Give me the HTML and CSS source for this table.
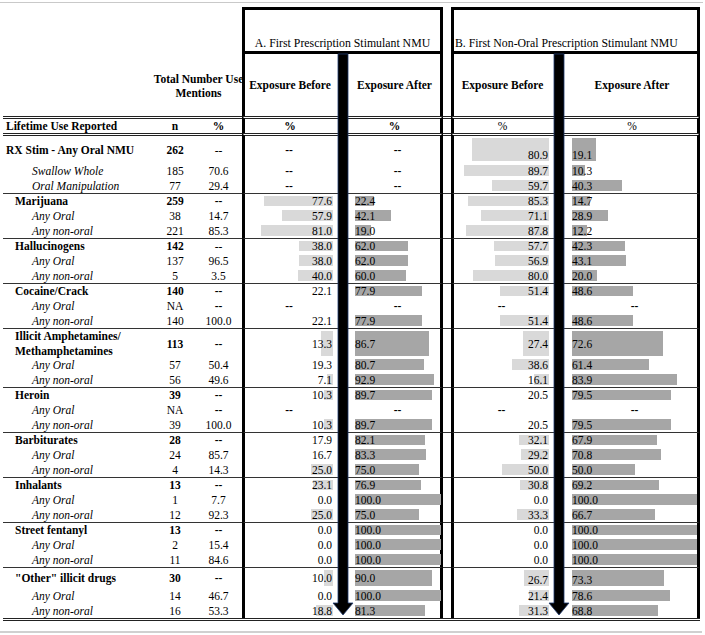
FILE: index.html
```html
<!DOCTYPE html>
<html>
<head>
<meta charset="utf-8">
<link rel="stylesheet" href="styles.css">
</head>
<body>
<div class="page">
  <div class="topline"></div>
  <div class="tbl">
    <div class="row h1">
      <div class="c blank3"></div>
      <div class="c hA">A. First Prescription Stimulant NMU</div>
      <div class="c gp"></div>
      <div class="c hB">B. First Non-Oral Prescription Stimulant NMU</div>
    </div>
    <div class="row h2">
      <div class="c"></div>
      <div class="c tot">Total Number Use<br>Mentions</div>
      <div class="c ab hd">Exposure Before</div>
      <div class="c ag"></div>
      <div class="c aa hd">Exposure After</div>
      <div class="c gp"></div>
      <div class="c bb hd">Exposure Before</div>
      <div class="c bg"></div>
      <div class="c ba hd">Exposure After</div>
    </div>
    <div class="row dbl life">
      <div class="c lab top b">Lifetime Use Reported</div>
      <div class="c n b">n</div>
      <div class="c p b">%</div>
      <div class="c ab ctr b">%</div>
      <div class="c ag"></div>
      <div class="c aa ctr b">%</div>
      <div class="c gp"></div>
      <div class="c bb ctr">%</div>
      <div class="c bg"></div>
      <div class="c ba ctr">%</div>
    </div>

    <!-- RX Stim -->
    <div class="row dbl t27 botB">
      <div class="c lab top b">RX Stim - Any Oral NMU</div>
      <div class="c n b">262</div>
      <div class="c p">--</div>
      <div class="c ab d"><span class="dash b">--</span></div>
      <div class="c ag"></div>
      <div class="c aa d"><span class="dash b">--</span></div>
      <div class="c gp"></div>
      <div class="c bb d"><span class="bar" style="--v:80.9"></span><span class="v">80.9</span></div>
      <div class="c bg"></div>
      <div class="c ba d"><span class="bar" style="--v:19.1"></span><span class="v">19.1</span></div>
    </div>
    <div class="row">
      <div class="c lab sub">Swallow Whole</div>
      <div class="c n">185</div>
      <div class="c p">70.6</div>
      <div class="c ab d"><span class="dash b">--</span></div>
      <div class="c ag"></div>
      <div class="c aa d"><span class="dash b">--</span></div>
      <div class="c gp"></div>
      <div class="c bb d"><span class="bar" style="--v:89.7"></span><span class="v">89.7</span></div>
      <div class="c bg"></div>
      <div class="c ba d"><span class="bar" style="--v:10.3"></span><span class="v">10.3</span></div>
    </div>
    <div class="row">
      <div class="c lab sub">Oral Manipulation</div>
      <div class="c n">77</div>
      <div class="c p">29.4</div>
      <div class="c ab d"><span class="dash b">--</span></div>
      <div class="c ag"></div>
      <div class="c aa d"><span class="dash b">--</span></div>
      <div class="c gp"></div>
      <div class="c bb d"><span class="bar" style="--v:59.7"></span><span class="v">59.7</span></div>
      <div class="c bg"></div>
      <div class="c ba d"><span class="bar" style="--v:40.3"></span><span class="v">40.3</span></div>
    </div>

    <!-- Marijuana -->
    <div class="row sep">
      <div class="c lab b">Marijuana</div>
      <div class="c n b">259</div>
      <div class="c p b">--</div>
      <div class="c ab d"><span class="bar" style="--v:77.6"></span><span class="v">77.6</span></div>
      <div class="c ag"></div>
      <div class="c aa d"><span class="bar" style="--v:22.4"></span><span class="v">22.4</span></div>
      <div class="c gp"></div>
      <div class="c bb d"><span class="bar" style="--v:85.3"></span><span class="v">85.3</span></div>
      <div class="c bg"></div>
      <div class="c ba d"><span class="bar" style="--v:14.7"></span><span class="v">14.7</span></div>
    </div>
    <div class="row">
      <div class="c lab sub">Any Oral</div>
      <div class="c n">38</div>
      <div class="c p">14.7</div>
      <div class="c ab d"><span class="bar" style="--v:57.9"></span><span class="v">57.9</span></div>
      <div class="c ag"></div>
      <div class="c aa d"><span class="bar" style="--v:42.1"></span><span class="v">42.1</span></div>
      <div class="c gp"></div>
      <div class="c bb d"><span class="bar" style="--v:71.1"></span><span class="v">71.1</span></div>
      <div class="c bg"></div>
      <div class="c ba d"><span class="bar" style="--v:28.9"></span><span class="v">28.9</span></div>
    </div>
    <div class="row">
      <div class="c lab sub">Any non-oral</div>
      <div class="c n">221</div>
      <div class="c p">85.3</div>
      <div class="c ab d"><span class="bar" style="--v:81.0"></span><span class="v">81.0</span></div>
      <div class="c ag"></div>
      <div class="c aa d"><span class="bar" style="--v:19.0"></span><span class="v">19.0</span></div>
      <div class="c gp"></div>
      <div class="c bb d"><span class="bar" style="--v:87.8"></span><span class="v">87.8</span></div>
      <div class="c bg"></div>
      <div class="c ba d"><span class="bar" style="--v:12.2"></span><span class="v">12.2</span></div>
    </div>

    <!-- Hallucinogens -->
    <div class="row sep">
      <div class="c lab b">Hallucinogens</div>
      <div class="c n b">142</div>
      <div class="c p">--</div>
      <div class="c ab d"><span class="bar" style="--v:38.0"></span><span class="v">38.0</span></div>
      <div class="c ag"></div>
      <div class="c aa d"><span class="bar" style="--v:62.0"></span><span class="v">62.0</span></div>
      <div class="c gp"></div>
      <div class="c bb d"><span class="bar" style="--v:57.7"></span><span class="v">57.7</span></div>
      <div class="c bg"></div>
      <div class="c ba d"><span class="bar" style="--v:42.3"></span><span class="v">42.3</span></div>
    </div>
    <div class="row">
      <div class="c lab sub">Any Oral</div>
      <div class="c n">137</div>
      <div class="c p">96.5</div>
      <div class="c ab d"><span class="bar" style="--v:38.0"></span><span class="v">38.0</span></div>
      <div class="c ag"></div>
      <div class="c aa d"><span class="bar" style="--v:62.0"></span><span class="v">62.0</span></div>
      <div class="c gp"></div>
      <div class="c bb d"><span class="bar" style="--v:56.9"></span><span class="v">56.9</span></div>
      <div class="c bg"></div>
      <div class="c ba d"><span class="bar" style="--v:43.1"></span><span class="v">43.1</span></div>
    </div>
    <div class="row">
      <div class="c lab sub">Any non-oral</div>
      <div class="c n">5</div>
      <div class="c p">3.5</div>
      <div class="c ab d"><span class="bar" style="--v:40.0"></span><span class="v">40.0</span></div>
      <div class="c ag"></div>
      <div class="c aa d"><span class="bar" style="--v:60.0"></span><span class="v">60.0</span></div>
      <div class="c gp"></div>
      <div class="c bb d"><span class="bar" style="--v:80.0"></span><span class="v">80.0</span></div>
      <div class="c bg"></div>
      <div class="c ba d"><span class="bar" style="--v:20.0"></span><span class="v">20.0</span></div>
    </div>

    <!-- Cocaine -->
    <div class="row sep">
      <div class="c lab b">Cocaine/Crack</div>
      <div class="c n b">140</div>
      <div class="c p b">--</div>
      <div class="c ab d"><span class="v">22.1</span></div>
      <div class="c ag"></div>
      <div class="c aa d"><span class="bar" style="--v:77.9"></span><span class="v">77.9</span></div>
      <div class="c gp"></div>
      <div class="c bb d"><span class="bar" style="--v:51.4"></span><span class="v">51.4</span></div>
      <div class="c bg"></div>
      <div class="c ba d"><span class="bar" style="--v:48.6"></span><span class="v">48.6</span></div>
    </div>
    <div class="row">
      <div class="c lab sub">Any Oral</div>
      <div class="c n">NA</div>
      <div class="c p b">--</div>
      <div class="c ab d"><span class="dash b">--</span></div>
      <div class="c ag"></div>
      <div class="c aa d"><span class="dash b">--</span></div>
      <div class="c gp"></div>
      <div class="c bb d"><span class="dash b">--</span></div>
      <div class="c bg"></div>
      <div class="c ba d"><span class="dash b">--</span></div>
    </div>
    <div class="row">
      <div class="c lab sub">Any non-oral</div>
      <div class="c n">140</div>
      <div class="c p">100.0</div>
      <div class="c ab d"><span class="v">22.1</span></div>
      <div class="c ag"></div>
      <div class="c aa d"><span class="bar" style="--v:77.9"></span><span class="v">77.9</span></div>
      <div class="c gp"></div>
      <div class="c bb d"><span class="bar" style="--v:51.4"></span><span class="v">51.4</span></div>
      <div class="c bg"></div>
      <div class="c ba d"><span class="bar" style="--v:48.6"></span><span class="v">48.6</span></div>
    </div>

    <!-- Amphetamines -->
    <div class="row sep t28">
      <div class="c lab b wrap">Illicit Amphetamines/<br>Methamphetamines</div>
      <div class="c n b">113</div>
      <div class="c p b">--</div>
      <div class="c ab d"><span class="bar" style="--v:13.3"></span><span class="v">13.3</span></div>
      <div class="c ag"></div>
      <div class="c aa d"><span class="bar" style="--v:86.7"></span><span class="v">86.7</span></div>
      <div class="c gp"></div>
      <div class="c bb d"><span class="bar" style="--v:27.4"></span><span class="v">27.4</span></div>
      <div class="c bg"></div>
      <div class="c ba d"><span class="bar" style="--v:72.6"></span><span class="v">72.6</span></div>
    </div>
    <div class="row">
      <div class="c lab sub">Any Oral</div>
      <div class="c n">57</div>
      <div class="c p">50.4</div>
      <div class="c ab d"><span class="v">19.3</span></div>
      <div class="c ag"></div>
      <div class="c aa d"><span class="bar" style="--v:80.7"></span><span class="v">80.7</span></div>
      <div class="c gp"></div>
      <div class="c bb d"><span class="bar" style="--v:38.6"></span><span class="v">38.6</span></div>
      <div class="c bg"></div>
      <div class="c ba d"><span class="bar" style="--v:61.4"></span><span class="v">61.4</span></div>
    </div>
    <div class="row">
      <div class="c lab sub">Any non-oral</div>
      <div class="c n">56</div>
      <div class="c p">49.6</div>
      <div class="c ab d"><span class="bar" style="--v:7.1"></span><span class="v">7.1</span></div>
      <div class="c ag"></div>
      <div class="c aa d"><span class="bar" style="--v:92.9"></span><span class="v">92.9</span></div>
      <div class="c gp"></div>
      <div class="c bb d"><span class="bar" style="--v:16.1"></span><span class="v">16.1</span></div>
      <div class="c bg"></div>
      <div class="c ba d"><span class="bar" style="--v:83.9"></span><span class="v">83.9</span></div>
    </div>

    <!-- Heroin -->
    <div class="row sep">
      <div class="c lab b">Heroin</div>
      <div class="c n b">39</div>
      <div class="c p b">--</div>
      <div class="c ab d"><span class="bar" style="--v:10.3"></span><span class="v">10.3</span></div>
      <div class="c ag"></div>
      <div class="c aa d"><span class="bar" style="--v:89.7"></span><span class="v">89.7</span></div>
      <div class="c gp"></div>
      <div class="c bb d"><span class="v">20.5</span></div>
      <div class="c bg"></div>
      <div class="c ba d"><span class="bar" style="--v:79.5"></span><span class="v">79.5</span></div>
    </div>
    <div class="row">
      <div class="c lab sub">Any Oral</div>
      <div class="c n">NA</div>
      <div class="c p b">--</div>
      <div class="c ab d"><span class="dash b">--</span></div>
      <div class="c ag"></div>
      <div class="c aa d"><span class="dash b">--</span></div>
      <div class="c gp"></div>
      <div class="c bb d"><span class="dash b">--</span></div>
      <div class="c bg"></div>
      <div class="c ba d"><span class="dash b">--</span></div>
    </div>
    <div class="row">
      <div class="c lab sub">Any non-oral</div>
      <div class="c n">39</div>
      <div class="c p">100.0</div>
      <div class="c ab d"><span class="bar" style="--v:10.3"></span><span class="v">10.3</span></div>
      <div class="c ag"></div>
      <div class="c aa d"><span class="bar" style="--v:89.7"></span><span class="v">89.7</span></div>
      <div class="c gp"></div>
      <div class="c bb d"><span class="v">20.5</span></div>
      <div class="c bg"></div>
      <div class="c ba d"><span class="bar" style="--v:79.5"></span><span class="v">79.5</span></div>
    </div>

    <!-- Barbiturates -->
    <div class="row sep">
      <div class="c lab b">Barbiturates</div>
      <div class="c n b">28</div>
      <div class="c p b">--</div>
      <div class="c ab d"><span class="v">17.9</span></div>
      <div class="c ag"></div>
      <div class="c aa d"><span class="bar" style="--v:82.1"></span><span class="v">82.1</span></div>
      <div class="c gp"></div>
      <div class="c bb d"><span class="bar" style="--v:32.1"></span><span class="v">32.1</span></div>
      <div class="c bg"></div>
      <div class="c ba d"><span class="bar" style="--v:67.9"></span><span class="v">67.9</span></div>
    </div>
    <div class="row">
      <div class="c lab sub">Any Oral</div>
      <div class="c n">24</div>
      <div class="c p">85.7</div>
      <div class="c ab d"><span class="v">16.7</span></div>
      <div class="c ag"></div>
      <div class="c aa d"><span class="bar" style="--v:83.3"></span><span class="v">83.3</span></div>
      <div class="c gp"></div>
      <div class="c bb d"><span class="bar" style="--v:29.2"></span><span class="v">29.2</span></div>
      <div class="c bg"></div>
      <div class="c ba d"><span class="bar" style="--v:70.8"></span><span class="v">70.8</span></div>
    </div>
    <div class="row">
      <div class="c lab sub">Any non-oral</div>
      <div class="c n">4</div>
      <div class="c p">14.3</div>
      <div class="c ab d"><span class="bar" style="--v:25.0"></span><span class="v">25.0</span></div>
      <div class="c ag"></div>
      <div class="c aa d"><span class="bar" style="--v:75.0"></span><span class="v">75.0</span></div>
      <div class="c gp"></div>
      <div class="c bb d"><span class="bar" style="--v:50.0"></span><span class="v">50.0</span></div>
      <div class="c bg"></div>
      <div class="c ba d"><span class="bar" style="--v:50.0"></span><span class="v">50.0</span></div>
    </div>

    <!-- Inhalants -->
    <div class="row sep">
      <div class="c lab b">Inhalants</div>
      <div class="c n b">13</div>
      <div class="c p b">--</div>
      <div class="c ab d"><span class="bar" style="--v:23.1"></span><span class="v">23.1</span></div>
      <div class="c ag"></div>
      <div class="c aa d"><span class="bar" style="--v:76.9"></span><span class="v">76.9</span></div>
      <div class="c gp"></div>
      <div class="c bb d"><span class="bar" style="--v:30.8"></span><span class="v">30.8</span></div>
      <div class="c bg"></div>
      <div class="c ba d"><span class="bar" style="--v:69.2"></span><span class="v">69.2</span></div>
    </div>
    <div class="row">
      <div class="c lab sub">Any Oral</div>
      <div class="c n">1</div>
      <div class="c p">7.7</div>
      <div class="c ab d"><span class="v">0.0</span></div>
      <div class="c ag"></div>
      <div class="c aa d"><span class="bar" style="--v:100"></span><span class="v">100.0</span></div>
      <div class="c gp"></div>
      <div class="c bb d"><span class="v">0.0</span></div>
      <div class="c bg"></div>
      <div class="c ba d"><span class="bar" style="--v:100"></span><span class="v">100.0</span></div>
    </div>
    <div class="row">
      <div class="c lab sub">Any non-oral</div>
      <div class="c n">12</div>
      <div class="c p">92.3</div>
      <div class="c ab d"><span class="bar" style="--v:25.0"></span><span class="v">25.0</span></div>
      <div class="c ag"></div>
      <div class="c aa d"><span class="bar" style="--v:75.0"></span><span class="v">75.0</span></div>
      <div class="c gp"></div>
      <div class="c bb d"><span class="bar" style="--v:33.3"></span><span class="v">33.3</span></div>
      <div class="c bg"></div>
      <div class="c ba d"><span class="bar" style="--v:66.7"></span><span class="v">66.7</span></div>
    </div>

    <!-- Street fentanyl -->
    <div class="row sep">
      <div class="c lab b">Street fentanyl</div>
      <div class="c n b">13</div>
      <div class="c p b">--</div>
      <div class="c ab d"><span class="v">0.0</span></div>
      <div class="c ag"></div>
      <div class="c aa d"><span class="bar" style="--v:100"></span><span class="v">100.0</span></div>
      <div class="c gp"></div>
      <div class="c bb d"><span class="v">0.0</span></div>
      <div class="c bg"></div>
      <div class="c ba d"><span class="bar" style="--v:100"></span><span class="v">100.0</span></div>
    </div>
    <div class="row">
      <div class="c lab sub">Any Oral</div>
      <div class="c n">2</div>
      <div class="c p">15.4</div>
      <div class="c ab d"><span class="v">0.0</span></div>
      <div class="c ag"></div>
      <div class="c aa d"><span class="bar" style="--v:100"></span><span class="v">100.0</span></div>
      <div class="c gp"></div>
      <div class="c bb d"><span class="v">0.0</span></div>
      <div class="c bg"></div>
      <div class="c ba d"><span class="bar" style="--v:100"></span><span class="v">100.0</span></div>
    </div>
    <div class="row">
      <div class="c lab sub">Any non-oral</div>
      <div class="c n">11</div>
      <div class="c p">84.6</div>
      <div class="c ab d"><span class="v">0.0</span></div>
      <div class="c ag"></div>
      <div class="c aa d"><span class="bar" style="--v:100"></span><span class="v">100.0</span></div>
      <div class="c gp"></div>
      <div class="c bb d"><span class="v">0.0</span></div>
      <div class="c bg"></div>
      <div class="c ba d"><span class="bar" style="--v:100"></span><span class="v">100.0</span></div>
    </div>

    <!-- Other -->
    <div class="row sep t20 botB">
      <div class="c lab b">"Other" illicit drugs</div>
      <div class="c n b">30</div>
      <div class="c p b">--</div>
      <div class="c ab d"><span class="bar" style="--v:10.0"></span><span class="v">10.0</span></div>
      <div class="c ag"></div>
      <div class="c aa d"><span class="bar" style="--v:90.0"></span><span class="v">90.0</span></div>
      <div class="c gp"></div>
      <div class="c bb d"><span class="bar" style="--v:26.7"></span><span class="v">26.7</span></div>
      <div class="c bg"></div>
      <div class="c ba d"><span class="bar" style="--v:73.3"></span><span class="v">73.3</span></div>
    </div>
    <div class="row">
      <div class="c lab sub">Any Oral</div>
      <div class="c n">14</div>
      <div class="c p">46.7</div>
      <div class="c ab d"><span class="v">0.0</span></div>
      <div class="c ag"></div>
      <div class="c aa d"><span class="bar" style="--v:100"></span><span class="v">100.0</span></div>
      <div class="c gp"></div>
      <div class="c bb d"><span class="bar" style="--v:21.4"></span><span class="v">21.4</span></div>
      <div class="c bg"></div>
      <div class="c ba d"><span class="bar" style="--v:78.6"></span><span class="v">78.6</span></div>
    </div>
    <div class="row">
      <div class="c lab sub">Any non-oral</div>
      <div class="c n">16</div>
      <div class="c p">53.3</div>
      <div class="c ab d"><span class="bar" style="--v:18.8"></span><span class="v">18.8</span></div>
      <div class="c ag"></div>
      <div class="c aa d"><span class="bar" style="--v:81.3"></span><span class="v">81.3</span></div>
      <div class="c gp"></div>
      <div class="c bb d"><span class="bar" style="--v:31.3"></span><span class="v">31.3</span></div>
      <div class="c bg"></div>
      <div class="c ba d"><span class="bar" style="--v:68.8"></span><span class="v">68.8</span></div>
    </div>

    <svg class="arrow arrowA" width="20" height="562" viewBox="0 0 20 562">
      <path d="M5 0 H15 V549 H20 L10 561 L0 549 H5 Z"/>
    </svg>
    <svg class="arrow arrowB" width="20" height="562" viewBox="0 0 20 562">
      <path d="M5 0 H15 V549 H20 L10 561 L0 549 H5 Z"/>
    </svg>
  </div>
  <div class="botline"></div>
</div>
</body>
</html>
```

FILE: styles.css
```css
body {
  margin: 0;
  background: #fff;
  color: #000;
  font-family: "Liberation Serif", "Times New Roman", serif;
  font-size: 11.5px;
}

.page {
  padding-top: 2px;
}

.topline {
  width: 703px;
  border-top: 1px solid #c9c9c9;
}

.botline {
  width: 702px;
  margin-top: 10px;
  border-top: 2px solid #d0d0d0;
}

.tbl {
  position: relative;
  width: 697px;
  margin: 4px 0 0 3px;
  border-bottom: 3px double #222;
}

.row {
  display: grid;
  grid-template-columns: 152px 40px 47px 93px 14px 94px 8px 100px 16px 133px;
  height: 15px;
}

.c {
  box-sizing: border-box;
  min-width: 0;
  display: flex;
  align-items: center;
  white-space: nowrap;
  line-height: 14px;
}

.b { font-weight: bold; }

/* header rows */
.h1 { height: 47px; }
.blank3 { grid-column: 1 / span 3; }
.hA, .hB {
  border: 3px solid #000;
  align-items: flex-end;
  padding-bottom: 1px;
  font-size: 11.8px;
}
.hA { grid-column: 4 / span 3; justify-content: center; }
.hB { grid-column: 8 / span 3; justify-content: flex-start; padding-left: 1px; }

.h2 { height: 62px; }
.tot {
  grid-column: 2 / span 2;
  justify-content: center;
  text-align: center;
  font-weight: bold;
  white-space: nowrap;
  padding-top: 2px;
}
.hd {
  justify-content: center;
  font-weight: bold;
  font-size: 11.5px;
}

.life { height: 17px; }
.ctr { justify-content: center; }

/* separators */
.dbl > .c { border-top: 3px double #222; }
.sep > .c { border-top: 1px solid #333; }

.t27 { height: 30px; }
.t28 { height: 29px; }
.t20 { height: 21px; }

/* left columns */
.lab { padding-left: 12px; }
.lab.top { padding-left: 3px; }
.lab.sub { padding-left: 29px; font-style: italic; }
.lab.wrap { white-space: normal; line-height: 14.5px; }
.n, .p { justify-content: center; }

/* panel borders */
.ab, .bb { border-left: 3px solid #000; }
.aa, .ba { border-right: 3px solid #000; }

/* data cells with bars */
.d {
  display: grid;
  grid-template-columns: 100%;
  grid-template-rows: 100%;
}
.d > * { grid-area: 1 / 1; }
.ab.d, .bb.d { padding-right: 2px; }
.aa.d { padding-left: 6px; }
.ba.d { padding-left: 5px; }

.bar {
  align-self: stretch;
  margin: 2px 0;
  background: #d9d9d9;
}
.ab .bar { justify-self: end; width: calc(var(--v) * 0.885px); }
.bb .bar { justify-self: end; width: calc(var(--v) * 0.95px); }
.aa .bar { justify-self: start; width: calc(var(--v) * 0.855px); background: #a6a6a6; }
.ba .bar { justify-self: start; width: calc(var(--v) * 1.25px); background: #a6a6a6; }

.v { align-self: center; }
.ab .v, .bb .v { justify-self: end; padding-right: 1px; }
.aa .v, .ba .v { justify-self: start; }
.botB .bb .v, .botB .ba .v { align-self: end; margin-bottom: 1px; }

.dash { justify-self: center; align-self: center; }

/* arrows overlaying the gap columns */
.arrow {
  position: absolute;
  top: 47px;
  overflow: visible;
}
.arrow path {
  fill: #000;
  stroke: #1f3a70;
  stroke-width: 0.8;
}
.arrowA { left: 330px; }
.arrowB { left: 546px; }
```
